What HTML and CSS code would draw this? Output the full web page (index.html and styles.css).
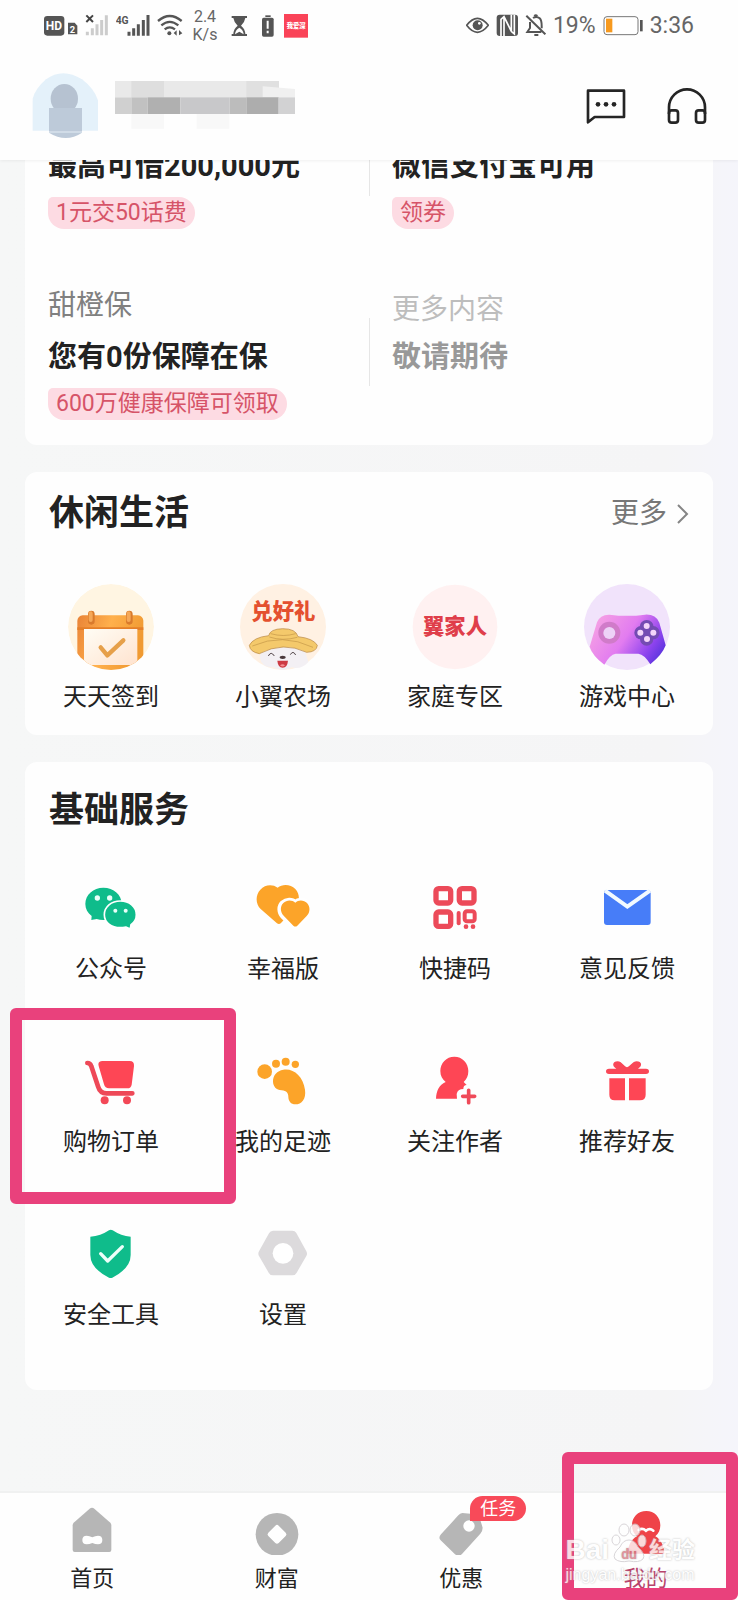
FILE: index.html
```html
<!DOCTYPE html>
<html lang="zh-CN">
<head>
<meta charset="utf-8">
<meta name="viewport" content="width=device-width, initial-scale=1">
<title>我的</title>
<link rel="stylesheet" href="styles.css">
</head>
<body>
<header class="top">
  <div class="status">
    <div class="status-group">
      <svg width="34" height="28" viewBox="132 36 102 84"><rect x="132" y="48" width="61" height="59" rx="10" fill="#555"/><text x="137" y="91" class="svg-bold" font-size="36" fill="#fff">HD</text><path d="M204 68h20l8 9v26h-28z" fill="#555"/><text x="209" y="98" class="svg-bold" font-size="28" fill="#fff">2</text></svg>
      <svg width="24" height="28" viewBox="255 36 72 84"><path d="M259 46l20 20m0-20l-20 20" stroke="#444" stroke-width="6"/><path d="M262 95v11m15-21v21m14-33v33m14-46v46m14-60v60" stroke="#ccc" stroke-width="9"/></svg>
      <svg width="34" height="28" viewBox="348 36 102 84"><text x="347" y="72" class="svg-bold" font-size="31" fill="#555">4G</text><path d="M387 95v12m14-22v22m14-34v34m15-47v47m14-62v62" stroke="#555" stroke-width="9"/></svg>
      <svg width="26" height="28" viewBox="468 36 78 84"><g fill="none" stroke="#555" stroke-width="7"><path d="M471 63q35-30 71 0M481 76q25-21 51 0M491 88q15-12 31 0"/></g><circle cx="505" cy="100" r="6" fill="#555"/><path d="M518 99l9-8v16zM534 90v16l10-6z" fill="#555"/></svg>
      <span class="speed">2.4<br>K/s</span>
      <svg width="24" height="28" viewBox="681 36 72 84"><path d="M695 48h46v6h-5q-2 13-13 23 12 9 13 25h5v6h-46v-6h5q1-16 13-25-11-10-13-23h-5z" fill="#555"/><path d="M705 103q1-14 13-20 12 6 13 20l-13-8z" fill="#fff"/></svg>
      <svg width="19" height="28" viewBox="774 36 57 84"><path d="M796 46h16v5h-16z" fill="#555"/><rect x="786" y="53" width="35" height="57" rx="5" fill="#555"/><path d="M803 62v24m0 6v8" stroke="#fff" stroke-width="6"/></svg>
      <svg width="24" height="28" viewBox="852 36 72 84"><rect x="852" y="42" width="72" height="71" fill="#fa4358"/><text x="860" y="84" class="svg-cjk" font-size="19" fill="#fff">我爱深</text></svg>
    </div>
    <div class="status-group">
      <svg width="23" height="28" viewBox="306 36 69 84"><path d="M308 76q32-42 65 0-33 42-65 0z" fill="none" stroke="#555" stroke-width="5"/><circle cx="341" cy="76" r="15" fill="#555"/><circle cx="346" cy="70" r="4" fill="#fff"/></svg>
      <svg width="22" height="28" viewBox="396 36 66 84"><rect x="398" y="44" width="64" height="64" rx="9" fill="#555"/><path d="M411 108V58l9-8 22 44V44M420 50v58M442 94l9 8V44" fill="none" stroke="#fff" stroke-width="5"/></svg>
      <svg width="21" height="28" viewBox="483 36 63 84"><g fill="none" stroke="#555" stroke-width="6"><path d="M487 47l57 56M498 66v18l-8 12h42M507 54q11-7 20 1 7 6 6 30M511 48q4-5 9 0M511 105h12"/></g></svg>
      <span class="status-text">19%</span>
      <svg width="40" height="28" viewBox="705 36 120 84"><rect x="708" y="50" width="102" height="54" rx="9" fill="#fff" stroke="#777" stroke-width="3"/><path d="M714 56h19v41h-19z" fill="#f79a1f"/><path d="M820 60v34" stroke="#555" stroke-width="8"/></svg>
      <time class="status-text">3:36</time>
    </div>
  </div>
  <div class="profile">
    <svg width="66" height="68" viewBox="96 216 198 204" role="img" aria-label="头像"><path d="M98 392v-96q8-30 40-58 50-36 108 0 40 30 50 70v84z" fill="#e4f1fa"/><ellipse cx="193" cy="296" rx="41" ry="44" fill="#b6c2d1"/><path d="M147 324h99v74q-48 32-99 0z" fill="#bdcad9"/><path d="M147 396h99" stroke="#e4edf5" stroke-width="3"/></svg>
    <svg class="masked-name" width="180" height="50" viewBox="345 246 540 150" role="img" aria-label="用户名"><path d="M345 246h480v49H345z" fill="#e9e9e9"/><path d="M394 246h98v49h-98z" fill="#dedede"/><path d="M739 246h98v49h-98z" fill="#e0e0e0"/><path d="M788 262l97 8v25h-97z" fill="#f0f0f0"/><path d="M345 295h49v50h-49z" fill="#d0d0d0"/><path d="M394 295h49v50h-49z" fill="#c1c1c1"/><path d="M443 295h98v50h-98z" fill="#b0b0b0"/><path d="M541 295h148v50H541z" fill="#c8c8ca"/><path d="M689 295h50v50h-50z" fill="#bcbcbc"/><path d="M739 295h97v50h-97z" fill="#adadad"/><path d="M836 295h49v50h-49z" fill="#d2d2d3"/><path d="M394 345h98v44h-98zM590 345h98v44h-98z" fill="#f8f8f8"/></svg>
    <button class="icon-button" type="button" aria-label="消息"><svg width="40" height="40" viewBox="651 258 120 120"><path d="M657 272h108v79h-88l-20 16z" fill="none" stroke="#252525" stroke-width="8" stroke-linejoin="round"/><g fill="#252525"><circle cx="687" cy="313" r="7"/><circle cx="711" cy="313" r="7"/><circle cx="735" cy="313" r="7"/></g></svg></button>
    <button class="icon-button" type="button" aria-label="客服"><svg width="40" height="40" viewBox="897 258 120 120"><g fill="none" stroke="#252525" stroke-width="8"><path d="M903 342v-20a54 54 0 0 1 108 0v20"/><rect x="903" y="331" width="27" height="37" rx="8"/><rect x="984" y="331" width="27" height="37" rx="8"/></g></svg></button>
  </div>
</header>

<main class="content">
  <section class="card features">
    <a class="feature" href="#"><strong class="feature-title">最高可借200,000元</strong><span class="tag">1元交50话费</span></a>
    <a class="feature feature-top" href="#"><strong class="feature-title">微信支付宝可用</strong><span class="tag">领券</span></a>
    <a class="feature" href="#"><span class="feature-label">甜橙保</span><strong class="feature-title">您有0份保障在保</strong><span class="tag">600万健康保障可领取</span></a>
    <div class="feature feature-soon"><span class="feature-label">更多内容</span><strong class="feature-title">敬请期待</strong></div>
  </section>

  <section class="card leisure">
    <div class="card-head">
      <h2>休闲生活</h2>
      <a class="more" href="#">更多<svg width="12" height="24" viewBox="0 0 12 24"><path d="M1 3l9 9-9 9" fill="none" stroke="#858585" stroke-width="2"/></svg></a>
    </div>
    <div class="grid">
      <a class="item" href="#">
        <svg width="86" height="86" viewBox="204 366 258 258"><defs><linearGradient id="cal" x2="1" y2=".3"><stop stop-color="#e98336"/><stop offset=".5" stop-color="#ffb04c"/><stop offset="1" stop-color="#f09a32"/></linearGradient><linearGradient id="paper" x2="1" y2="1"><stop stop-color="#fffdf5"/><stop offset="1" stop-color="#ffe3cf"/></linearGradient><clipPath id="c1"><circle cx="333" cy="495" r="129"/></clipPath></defs><g clip-path="url(#c1)"><circle cx="333" cy="495" r="129" fill="#fff5e2"/><rect x="232" y="460" width="198" height="170" rx="16" fill="url(#cal)"/><path d="M232 496h198v8H232z" fill="#e57f29"/><path d="M252 501h160v96q-5 12-16 12H252z" fill="url(#paper)"/><path d="M302 556l20 24 48-45" fill="none" stroke="#e6a04a" stroke-width="13" stroke-linecap="round" stroke-linejoin="round"/></g><path d="M274 456v22M388 456v22" stroke="#d97a2c" stroke-width="20" stroke-linecap="round"/><path d="M272 454v20M386 454v20" stroke="#f5a858" stroke-width="12" stroke-linecap="round"/></svg>
        <span>天天签到</span>
      </a>
      <a class="item" href="#">
        <svg width="86" height="86" viewBox="720 366 258 258"><circle cx="849" cy="495" r="129" fill="#fff1e3"/><text x="850" y="470" text-anchor="middle" class="svg-cjk" font-size="64" fill="#e4502f">兑好礼</text><path d="M785 560q62-36 128 0l12 40q-22 24-50 16-26 16-54 0-36 2-42-30z" fill="#f3f0f4"/><path d="M748 550q12-24 58-29 4-20 42-21 40 0 46 24 46 5 58 26-2 20-32 21-70-34-142 4-28-5-30-25z" fill="#f4c96b" stroke="#b5823a" stroke-width="2"/><path d="M808 525q40 13 84 1M757 552q90-40 182 4M812 515q38 11 75 0" fill="none" stroke="#c39647" stroke-width="2"/><path d="M805 582q8-16 18 0M871 578q8-14 16 1" fill="none" stroke="#55484b" stroke-width="3"/><ellipse cx="848" cy="586" rx="9" ry="5" fill="#49383b"/><path d="M832 596h32q-2 21-16 21t-16-21z" fill="#cd3a43"/><path d="M840 610q8-6 15 0-7 7-15 0z" fill="#f58f93"/></svg>
        <span>小翼农场</span>
      </a>
      <a class="item" href="#">
        <svg width="86" height="86" viewBox="132 366 258 258"><circle cx="261" cy="495" r="127" fill="#fff1f1"/><text x="261" y="517" text-anchor="middle" class="svg-cjk" font-size="64" fill="#df3e4a">翼家人</text></svg>
        <span>家庭专区</span>
      </a>
      <a class="item" href="#">
        <svg width="86" height="86" viewBox="648 366 258 258"><defs><linearGradient id="pad" x1="0" y1=".3" x2="1" y2=".75"><stop stop-color="#f5a0e4"/><stop offset=".45" stop-color="#e27cf0"/><stop offset=".8" stop-color="#8d43ee"/><stop offset="1" stop-color="#5733dc"/></linearGradient></defs><circle cx="777" cy="495" r="129" fill="#f1e3fb"/><path d="M687 481q9-24 38-23 52 7 106 0 32-2 43 24l19 68q-10 28-46 57-18-30-36-32h-68q-18 3-34 33-36-27-44-54z" fill="url(#pad)"/><circle cx="724" cy="512" r="33" fill="#d07bc9"/><circle cx="724" cy="513" r="18" fill="#edd2f7"/><g fill="#744bb3"><circle cx="836" cy="495" r="21"/><circle cx="836" cy="531" r="20"/><circle cx="819" cy="512" r="20"/><circle cx="855" cy="512" r="20"/></g><g fill="#f4d5fa"><circle cx="836" cy="492" r="9"/><circle cx="837" cy="531" r="9"/><circle cx="817" cy="512" r="9"/><circle cx="856" cy="512" r="9"/></g></svg>
        <span>游戏中心</span>
      </a>
    </div>
  </section>

  <section class="card services">
    <div class="card-head"><h2>基础服务</h2></div>
    <div class="grid">
      <a class="item" href="#"><svg width="54" height="54" viewBox="252 360 162 162"><path d="M310 380c31 0 55 21 55 49s-24 48-55 48c-7 0-14-1-20-3l-16 3 1-12c-12-9-19-21-19-36 0-28 24-49 54-49z" fill="#0fbc8b"/><path d="M361 420c27 0 48 17 48 41 0 13-6 23-16 30l-2 13-13-6c-5 1-11 2-17 2-27 0-48-16-48-39s21-41 48-41z" fill="#0fbc8b" stroke="#fff" stroke-width="5"/><g fill="#e9fff9"><circle cx="292" cy="411" r="8"/><circle cx="329" cy="411" r="8"/><circle cx="346" cy="449" r="6"/><circle cx="377" cy="449" r="6"/></g></svg><span>公众号</span></a>
      <a class="item" href="#"><svg width="54" height="54" viewBox="768 360 162 162"><path d="M833 380c14-12 39-11 53 4 16 17 13 43-3 59l-40 43q-6 6-13 0l-48-42c-16-16-16-42-1-58 14-16 37-17 52-6z" fill="#fca429"/><path d="M886 425c10-10 27-8 37 2 12 12 10 30-1 40l-30 29q-6 5-12 0l-31-30c-11-12-12-29-1-40 11-10 28-11 38-1z" fill="#fca429" stroke="#fff" stroke-width="16"/><path d="M886 425c10-10 26-8 35 1 11 12 9 29-1 39l-28 29q-6 5-12 0l-29-30c-11-11-11-28-1-38 10-10 26-10 36-1z" fill="#fca429"/></svg><span>幸福版</span></a>
      <a class="item" href="#"><svg width="54" height="54" viewBox="180 360 162 162"><g fill="none" stroke="#ec4a59" stroke-width="16"><rect x="204" y="383" width="44" height="43" rx="8"/><rect x="274" y="383" width="44" height="43" rx="8"/><rect x="204" y="453" width="44" height="43" rx="8"/></g><rect x="290" y="451" width="30" height="30" rx="7" fill="none" stroke="#ec4a59" stroke-width="12"/><path d="M272 456v31" stroke="#ec4a59" stroke-width="12" stroke-linecap="round"/><circle cx="294" cy="497" r="7" fill="#ec4a59"/><circle cx="315" cy="497" r="7" fill="#ec4a59"/></svg><span>快捷码</span></a>
      <a class="item" href="#"><svg width="54" height="54" viewBox="696 360 162 162"><rect x="708" y="387" width="140" height="105" rx="9" fill="#477df8"/><path d="M711 389l67 48 68-48" fill="none" stroke="#f2faff" stroke-width="12"/></svg><span>意见反馈</span></a>

      <a class="item marked" href="#"><svg width="54" height="54" viewBox="252 159 162 162"><path d="M306 180h83q14 0 13 15l-7 56q-2 11-13 11h-55q-12 0-15-12l-16-55q-4-14 10-15z" fill="#fe4655"/><path d="M262 186q9 0 12 10l20 60q6 21 26 21h77" fill="none" stroke="#ee4958" stroke-width="14" stroke-linecap="round" stroke-linejoin="round"/><circle cx="314" cy="298" r="12" fill="#f34857"/><circle cx="381" cy="298" r="12" fill="#f34857"/></svg><span>购物订单</span></a>
      <a class="item" href="#"><svg width="54" height="54" viewBox="768 159 162 162"><g fill="#fca429"><circle cx="794" cy="212" r="22"/><circle cx="828" cy="188" r="12"/><circle cx="857" cy="182" r="12"/><circle cx="886" cy="190" r="11"/><path d="M850 206c30-5 59 19 65 60 4 28-10 44-29 44-13 0-21-10-21-23 0-10-5-18-20-19-16-1-26-11-26-27 0-18 12-32 31-35z"/></g></svg><span>我的足迹</span></a>
      <a class="item" href="#"><svg width="54" height="54" viewBox="180 159 162 162"><path d="M259 167c24 0 42 19 42 43 0 15-5 24-14 33l9 9q-10 0-10 12-17 0-20 15l1 14h-63c1-23 9-41 29-50-10-8-16-18-16-33 0-24 18-43 42-43z" fill="#fe4655"/><path d="M302 268v37M284 286h36" stroke="#ef4a59" stroke-width="11" stroke-linecap="round"/></svg><span>关注作者</span></a>
      <a class="item" href="#"><svg width="54" height="54" viewBox="696 159 162 162"><path d="M723 203h22c-14-7-12-22 4-22 12 0 19 16 28 18 9-2 17-18 29-18 16 0 18 15 4 22h24q9 0 9 8t-9 8H723q-9 0-9-8t9-8z" fill="#f94757"/><path d="M724 232h47v66h-31q-16 0-16-17zM783 232h50v49q0 17-17 17h-33z" fill="#fe4655"/></svg><span>推荐好友</span></a>

      <a class="item" href="#"><svg width="54" height="54" viewBox="252 678 162 162"><path d="M327 688q5-4 11 0 25 17 54 19v55q0 40-55 68-5 2-10 0-56-28-56-68v-55q31-2 56-19z" fill="#0fbc8b"/><path d="M302 758l21 22 44-43" fill="none" stroke="#edfffa" stroke-width="10" stroke-linecap="round" stroke-linejoin="round"/></svg><span>安全工具</span></a>
      <a class="item" href="#"><svg width="54" height="54" viewBox="768 678 162 162"><path d="M819 689h58q8 0 12 7l30 55q4 7 0 14l-29 50q-4 8-13 8h-58q-9 0-13-8l-29-50q-4-7 0-14l30-54q4-8 12-8z" fill="#dcdadc"/><circle cx="849" cy="757" r="31" fill="#fff"/></svg><span>设置</span></a>
    </div>
  </section>
</main>

<nav class="tabs">
  <a class="tab" href="#"><svg width="48" height="48" viewBox="205 381 144 144"><path d="M270 386q7-6 14 0l48 42q3 3 3 8v74q0 6-6 6H225q-6 0-6-6v-74q0-5 3-8z" fill="#b6b6b6"/><path d="M261 467q8 0 17 5 9-5 17-5 13 0 13 13t-13 13q-8 0-17-4-9 4-17 4-13 0-13-13t13-13z" fill="#fff"/></svg><span>首页</span></a>
  <a class="tab" href="#"><svg width="48" height="48" viewBox="758 381 144 144"><circle cx="830" cy="463" r="64" fill="#b6b6b6"/><path d="M825 437q5-5 10 0l21 21q5 5 0 10l-21 21q-5 5-10 0l-21-21q-5-5 0-10z" fill="#fff"/></svg><span>财富</span></a>
  <a class="tab" href="#"><span class="tab-icon"><svg width="48" height="48" viewBox="208 381 144 144"><path d="M284 399l40 4q8 1 11 8l10 32q0 10-7 18l-55 61q-10 10-21 1l-43-42q-8-8 1-18l52-57q5-6 12-7z" fill="#b6b6b6"/><circle cx="304" cy="438" r="17" fill="#fff"/></svg><em class="badge">任务</em></span><span>优惠</span></a>
  <a class="tab tab-active marked" href="#" aria-current="page"><svg width="48" height="48" viewBox="761 381 144 144"><path d="M834 393c24 0 42 18 42 43 0 14-5 25-15 33 17 10 26 28 27 52H778c1-24 10-42 28-52-10-8-15-19-15-33 0-25 18-43 43-43z" fill="#ef4348"/><path d="M811 450q11-8 22 2 11-9 22 0" fill="none" stroke="#fff" stroke-width="8" stroke-linecap="round"/></svg><span>我的</span>
    <span class="watermark"><span class="watermark-brand">Bai<svg width="36" height="42" viewBox="0 0 36 42"><g fill="#fff" stroke="#d0ccd0" stroke-width="1"><ellipse cx="5" cy="18" rx="4" ry="5"/><ellipse cx="13" cy="8" rx="5" ry="6"/><ellipse cx="24" cy="8" rx="5" ry="6"/><ellipse cx="31" cy="19" rx="4" ry="6"/><path d="M18 18q6 0 9 7 8 7 5 12-4 4-14 2-9 2-14-2-3-5 5-12 3-7 9-7z"/></g><text x="18" y="37" text-anchor="middle" class="svg-bold" font-size="14" fill="#d77c86">du</text></svg><span class="watermark-cn">经验</span></span><span class="watermark-site">jingyan.baidu.com</span></span>
  </a>
</nav>
</body>
</html>
```
FILE: styles.css
```css
* {
  box-sizing: border-box;
}

body {
  margin: 0;
  min-height: 100vh;
  display: flex;
  flex-direction: column;
  background: linear-gradient(90deg, #f6f7f7 0%, #f5f5f6 90%, #f5f5fb 100%);
  color: #222;
  font-family: Roboto, "Noto Sans CJK SC", sans-serif;
}

a {
  color: inherit;
  text-decoration: none;
}

svg {
  display: block;
  flex: none;
}

.svg-bold {
  font-family: Roboto, sans-serif;
  font-weight: 700;
}

.svg-cjk {
  font-family: "Noto Sans CJK SC", sans-serif;
  font-weight: 900;
}

/* Header */
.top {
  position: sticky;
  top: 0;
  z-index: 2;
  background: #fefefe;
  box-shadow: 0 1px 3px rgba(0, 0, 0, 0.06);
}

.status {
  display: flex;
  justify-content: space-between;
  padding: 0 44px;
  height: 52px;
}

.status-group {
  display: flex;
  align-items: center;
  gap: 7px;
}

.speed {
  width: 30px;
  color: #666;
  font-size: 16px;
  line-height: 18px;
  text-align: center;
}

.status-text {
  color: #666;
  font-size: 23px;
  line-height: 28px;
}

.profile {
  display: flex;
  align-items: center;
  padding: 20px 31px 20px 32px;
}

.masked-name {
  margin: 0 auto 0 17px;
}

.icon-button {
  margin-left: 41px;
  padding: 0;
  border: 0;
  background: none;
}

/* Cards */
.content {
  flex: 1;
  display: flex;
  flex-direction: column;
  gap: 27px;
  margin-top: -14px;
  padding: 0 25px 27px;
}

.card {
  border-radius: 12px;
  background: #fefefe;
}

.card-head {
  display: flex;
  align-items: center;
  justify-content: space-between;
  padding: 0 24px;
}

h2 {
  margin: 0;
  font-size: 35px;
  line-height: 48px;
}

.more {
  display: flex;
  align-items: center;
  gap: 10px;
  color: #777;
  font-size: 28px;
  line-height: 40px;
}

.features {
  display: grid;
  grid-template-columns: 1fr 1fr;
  row-gap: 57px;
  padding-bottom: 25px;
}

.feature {
  position: relative;
  display: flex;
  flex-direction: column;
  align-items: flex-start;
  gap: 11px;
  padding: 0 23px;
  line-height: 40px;
  font-size: 28px;
}

.feature-title {
  font-size: 29px;
}

.feature-label {
  color: #808080;
}

.feature-top::before,
.feature-soon::before {
  content: "";
  position: absolute;
  left: 0;
  top: 0;
  width: 1px;
  height: 50px;
  background: #e6e6e6;
}

.feature-soon::before {
  top: 32px;
  height: 68px;
}

.feature-soon {
  gap: 3px;
  color: #999;
}

.feature-soon .feature-label {
  color: #bdbdbd;
  line-height: 48px;
}

.tag {
  padding: 0 8px;
  border-radius: 5px 16px 16px 16px;
  background: #fddbe3;
  color: #d65468;
  font-size: 23px;
  line-height: 32px;
}

.grid {
  display: grid;
  grid-template-columns: repeat(4, 1fr);
}

.item {
  position: relative;
  display: flex;
  flex-direction: column;
  align-items: center;
  font-size: 24px;
  line-height: 32px;
}

.leisure {
  padding: 18px 0 22px;
}

.leisure .grid {
  padding-top: 46px;
}

.leisure .item {
  gap: 11px;
}

.services {
  padding: 25px 0 59px;
}

.services .grid {
  padding-top: 46px;
  row-gap: 69px;
}

.services .item {
  gap: 18px;
}

/* Highlight frames */
.marked::after {
  content: "";
  position: absolute;
  inset: -46px -39px -46px -15px;
  border: 12px solid #e9417c;
  border-radius: 6px;
}

.tab.marked::after {
  inset: -41px 0 0 8px;
}

/* Bottom tabs */
.tabs {
  display: grid;
  grid-template-columns: repeat(4, 1fr);
  border-top: 2px solid #f0f1f1;
  background: #fefefe;
}

.tab {
  position: relative;
  display: flex;
  flex-direction: column;
  align-items: center;
  gap: 10px;
  padding: 14px 0 7px;
  font-size: 22px;
  line-height: 28px;
}

.tab-active {
  color: #b8436b;
}

.tab-icon {
  position: relative;
}

.badge {
  position: absolute;
  left: 33px;
  top: -11px;
  padding: 0 10px;
  border-radius: 13px 13px 13px 0;
  background: #f84a59;
  color: #fff;
  font-size: 18px;
  font-style: normal;
  line-height: 25px;
  white-space: nowrap;
}

.watermark {
  position: absolute;
  z-index: 1;
  left: 12px;
  bottom: 14px;
  display: flex;
  flex-direction: column;
  color: #fff;
  font-family: "Liberation Sans", "Noto Sans CJK SC", sans-serif;
  text-shadow: 0 0 2px #aaa;
  opacity: 0.8;
  white-space: nowrap;
}

.watermark-brand {
  display: flex;
  align-items: flex-end;
  gap: 2px;
  font-size: 28px;
  font-weight: 700;
  line-height: 28px;
}

.watermark-cn {
  font-size: 23px;
}

.watermark-site {
  font-size: 16px;
  line-height: 22px;
}
```
